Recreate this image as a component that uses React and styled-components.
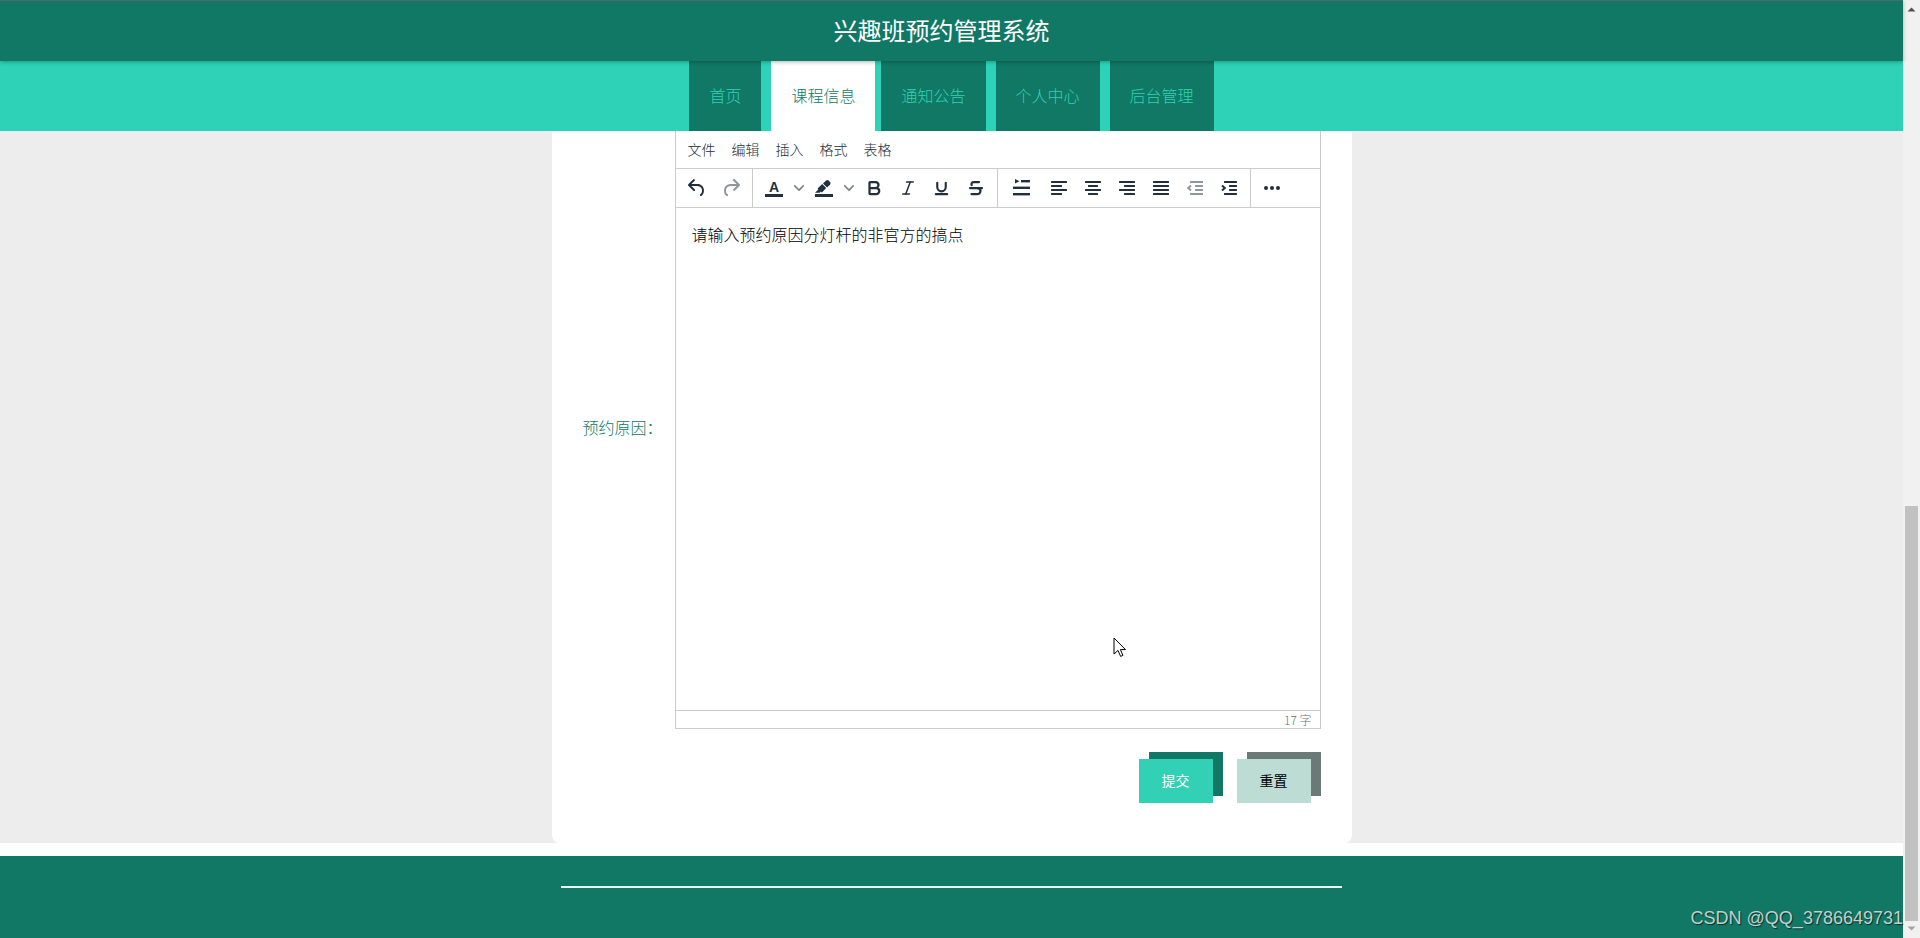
import { useState } from 'react';
import styled, { createGlobalStyle } from 'styled-components';
import { Bold, Italic, Strikethrough, Underline } from 'lucide-react';

const GlobalStyle = createGlobalStyle`
  :root {
    --primary: #107865;
    --accent: #2ed2b6;
    --surface: #ffffff;
    --page: #ededed;
    --line: #cccccc;
    --icon: #222f3e;
  }

  * {
    box-sizing: border-box;
  }

  body {
    margin: 0;
    background: var(--surface);
    font-family: "Noto Sans CJK SC", sans-serif;
    font-weight: 300;
    font-size: 16px;
  }

  button, textarea {
    font: inherit;
    border: none;
    padding: 0;
    background: none;
  }
`;

const Window = styled.div`
  display: grid;
  grid-template-columns: 1fr 17px;
  min-height: 100vh;
`;

const Page = styled.div`
  display: flex;
  flex-direction: column;
  min-width: 0;
`;

const Header = styled.header`
  position: relative;
  z-index: 1;
  height: 61px;
  padding: 0 20px 2px 0;
  display: flex;
  align-items: center;
  justify-content: center;
  background: var(--primary);
  border-top: 1px solid #4a6b6a;
  box-shadow: 0 1px 4px rgba(0, 0, 0, 0.3);
`;

const Title = styled.h1`
  margin: 0;
  font-size: 24px;
  line-height: 32px;
  font-weight: 400;
  color: #ffffff;
`;

const Nav = styled.nav`
  display: flex;
  justify-content: center;
  gap: 10px;
  height: 70px;
  background: var(--accent);
`;

const NavLink = styled.a`
  display: flex;
  align-items: center;
  padding: 0 20px 2px;
  text-decoration: none;
  color: ${props => props.$active ? 'var(--primary)' : 'var(--accent)'};
  background: ${props => props.$active ? 'var(--surface)' : 'var(--primary)'};
  margin-right: ${props => props.$active ? '-4px' : '0'};
`;

const Main = styled.main`
  background: var(--page);
`;

const Card = styled.form`
  max-width: 800px;
  margin: 0 auto;
  padding: 0 31px 40px;
  background: var(--surface);
  border-radius: 0 0 8px 8px;
`;

const Field = styled.div`
  display: flex;
  align-items: center;
  gap: 12px;
`;

const Label = styled.label`
  flex: none;
  padding-bottom: 6px;
  color: var(--primary);
`;

const Editor = styled.div`
  flex: 1;
  min-width: 0;
  border: 1px solid var(--line);
  border-top: none;
`;

const MenuBar = styled.div`
  display: flex;
  gap: 8px;
  height: 37px;
  padding: 0 8px 2px;
  align-items: center;
`;

const MenuButton = styled.button`
  padding: 0 4px;
  font-size: 14px;
  line-height: 24px;
  color: var(--icon);
`;

const ToolBar = styled.div`
  display: flex;
  height: 40px;
  border-top: 1px solid var(--line);
  border-bottom: 1px solid var(--line);
`;

const ToolGroup = styled.div`
  display: flex;
  align-items: center;
  padding: 0 4px;

  & + & {
    border-left: 1px solid var(--line);
  }
`;

const ToolButton = styled.button`
  display: flex;
  align-items: center;
  justify-content: center;
  width: ${props => props.$width || 34}px;
  height: 34px;
  color: var(--icon);

  &:disabled {
    opacity: 0.5;
  }
`;

const Content = styled.div`
  position: relative;
`;

const TextArea = styled.textarea`
  display: block;
  width: 100%;
  height: 502px;
  padding: 14px 16px;
  line-height: 24px;
  color: #000000;
  resize: none;
  outline: none;
`;

const Pointer = styled.svg`
  position: absolute;
  left: 437px;
  top: 429px;
`;

const StatusBar = styled.div`
  border-top: 1px solid var(--line);
  padding: 0 8px;
  text-align: right;
  font-size: 12px;
  line-height: 17px;
  color: #707275;
`;

const Actions = styled.div`
  display: flex;
  justify-content: flex-end;
  gap: 24px;
  padding: 30px 10px 0 0;
`;

const ActionButton = styled.button`
  width: 74px;
  height: 44px;
  padding-bottom: 2px;
  font-size: 14px;
  font-weight: 400;
  color: ${props => props.$secondary ? '#000000' : '#ffffff'};
  background: ${props => props.$secondary ? '#bddcd4' : '#32d1b6'};
  box-shadow: 10px -7px 0 ${props => props.$secondary ? '#6b7a76' : 'var(--primary)'};
`;

const Footer = styled.footer`
  position: relative;
  flex: 1;
  margin-top: 13px;
  padding-top: 30px;
  background: var(--primary);
`;

const Divider = styled.hr`
  max-width: 781px;
  height: 2px;
  margin: 0 auto;
  border: none;
  background: #e6f7f3;
`;

const Watermark = styled.span`
  position: absolute;
  right: 0;
  bottom: 8px;
  font-family: "Liberation Sans", sans-serif;
  font-size: 18px;
  line-height: 24px;
  color: #c3cfcc;
  text-shadow: 1px 1px 1px rgba(0, 0, 0, 0.6);
`;

const ScrollTrack = styled.div`
  display: flex;
  flex-direction: column;
  align-items: center;
  background: #f1f1f1;
`;

const ScrollArrow = styled.svg`
  flex: none;
  transform: ${props => props.$down ? 'rotate(180deg)' : 'none'};
`;

const ScrollSpace = styled.div`
  flex: 489;
`;

const ScrollThumb = styled.div`
  flex: 415;
  width: 13px;
  background: #c1c1c1;
`;

const Icon = ({ d, children }) => (
  <svg width="24" height="24" viewBox="0 0 24 24" fill="currentColor" aria-hidden="true">
    {d && <path d={d} />}
    {children}
  </svg>
);

// each line is [x, width], drawn from top to bottom
const LinesIcon = ({ lines, children }) => (
  <Icon>
    {lines.map(([x, width], i) => (
      <rect key={i} x={x} y={5 + i * 4} width={width} height="2" rx="0.5" />
    ))}
    {children}
  </Icon>
);

const Chevron = () => (
  <svg width="10" height="10" viewBox="0 0 10 10" fill="currentColor" opacity="0.6" aria-hidden="true">
    <path d="M8.7 2.2c.3-.3.8-.3 1 0 .4.4.4.9 0 1.2L5.7 7.8c-.3.3-.9.3-1.2 0L.2 3.4a.8.8 0 0 1 0-1.2c.3-.3.8-.3 1.1 0L5 6l3.7-3.8z" />
  </svg>
);

const TextColorIcon = () => (
  <Icon>
    <text x="12" y="16" textAnchor="middle" fontFamily="Liberation Sans" fontWeight="700" fontSize="14">A</text>
    <rect x="3" y="18" width="18" height="3" />
  </Icon>
);

const HighlightIcon = () => (
  <Icon d="M7.7 16.7H3l3.3-3.3-.7-.8L10.2 8l4 4.1-4 4.2c-.2.2-.6.2-.8 0l-.6-.7-1.1 1.1zm5-7.5L11 7.4l3-2.9a2 2 0 0 1 2.6 0L18 6c.7.7.7 2 0 2.7l-2.9 2.9-1.8-1.8-.5-.6">
    <rect x="3" y="18" width="18" height="3" />
  </Icon>
);

const LineHeightIcon = () => (
  <Icon>
    <path d="M5 3l4.5 2.2L5 7.5z" />
    <rect x="11" y="4" width="9" height="2.4" />
    <rect x="3" y="10.6" width="17" height="2.4" />
    <rect x="3" y="17" width="17" height="2.4" />
  </Icon>
);

const indentLines = [[7, 13], [12, 8], [12, 8], [7, 13]];

const toolGroups = [
  [
    { label: '撤销', icon: <Icon d="M6.4 8H12c3.7 0 6.2 2 6.8 5.1.6 2.7-.4 5.6-2.3 6.8a1 1 0 0 1-1-1.8c1.1-.6 1.8-2.7 1.4-4.6-.5-2.1-2.1-3.5-4.9-3.5H6.4l3.3 3.3a1 1 0 1 1-1.4 1.4l-5-5a1 1 0 0 1 0-1.4l5-5a1 1 0 0 1 1.4 1.4L6.4 8z" /> },
    { label: '重做', disabled: true, icon: <Icon d="M17.6 10H12c-2.8 0-4.4 1.4-4.9 3.5-.4 2 .3 4 1.4 4.6a1 1 0 1 1-1 1.8c-2-1.2-2.9-4.1-2.3-6.8.6-3 3-5.1 6.8-5.1h5.6l-3.3-3.3a1 1 0 1 1 1.4-1.4l5 5a1 1 0 0 1 0 1.4l-5 5a1 1 0 0 1-1.4-1.4l3.3-3.3z" /> },
  ],
  [
    { label: '文字颜色', icon: <TextColorIcon /> },
    { label: '选择文字颜色', width: 16, icon: <Chevron /> },
    { label: '背景颜色', icon: <HighlightIcon /> },
    { label: '选择背景颜色', width: 16, icon: <Chevron /> },
    { label: '粗体', icon: <Bold size={18} strokeWidth={3} /> },
    { label: '斜体', icon: <Italic size={18} strokeWidth={2} /> },
    { label: '下划线', icon: <Underline size={17} strokeWidth={3} /> },
    { label: '删除线', icon: <Strikethrough size={18} strokeWidth={3} /> },
  ],
  [
    { label: '行高', width: 40, icon: <LineHeightIcon /> },
    { label: '左对齐', icon: <LinesIcon lines={[[4, 16], [4, 11], [4, 16], [4, 11]]} /> },
    { label: '居中对齐', icon: <LinesIcon lines={[[4, 16], [7, 10], [4, 16], [7, 10]]} /> },
    { label: '右对齐', icon: <LinesIcon lines={[[4, 16], [9, 11], [4, 16], [9, 11]]} /> },
    { label: '两端对齐', icon: <LinesIcon lines={[[4, 16], [4, 16], [4, 16], [4, 16]]} /> },
    {
      label: '减少缩进',
      disabled: true,
      icon: (
        <LinesIcon lines={indentLines}>
          <path d="M8 9.5L5.2 12 8 14.5" fill="none" stroke="currentColor" strokeWidth="2" />
        </LinesIcon>
      ),
    },
    {
      label: '增加缩进',
      icon: (
        <LinesIcon lines={indentLines}>
          <path d="M5 9.5L7.8 12 5 14.5" fill="none" stroke="currentColor" strokeWidth="2" />
        </LinesIcon>
      ),
    },
  ],
  [
    {
      label: '更多',
      icon: (
        <Icon>
          <circle cx="6" cy="12" r="2" />
          <circle cx="12" cy="12" r="2" />
          <circle cx="18" cy="12" r="2" />
        </Icon>
      ),
    },
  ],
];

const navItems = ['首页', '课程信息', '通知公告', '个人中心', '后台管理'];
const menus = ['文件', '编辑', '插入', '格式', '表格'];

const App = () => {
  const [reason, setReason] = useState('请输入预约原因分灯杆的非官方的搞点');

  return (
    <Window>
      <GlobalStyle />
      <Page>
        <Header>
          <Title>兴趣班预约管理系统</Title>
        </Header>
        <Nav>
          {navItems.map(item => (
            <NavLink key={item} href="#" $active={item === '课程信息'}>{item}</NavLink>
          ))}
        </Nav>

        <Main>
          <Card onSubmit={(e) => e.preventDefault()}>
            <Field>
              <Label htmlFor="reason">预约原因：</Label>
              <Editor>
                <MenuBar>
                  {menus.map(menu => (
                    <MenuButton key={menu} type="button">{menu}</MenuButton>
                  ))}
                </MenuBar>
                <ToolBar>
                  {toolGroups.map((tools, i) => (
                    <ToolGroup key={i}>
                      {tools.map(tool => (
                        <ToolButton
                          key={tool.label}
                          type="button"
                          aria-label={tool.label}
                          disabled={tool.disabled}
                          $width={tool.width}
                        >
                          {tool.icon}
                        </ToolButton>
                      ))}
                    </ToolGroup>
                  ))}
                </ToolBar>
                <Content>
                  <TextArea
                    id="reason"
                    spellCheck={false}
                    value={reason}
                    onChange={(e) => setReason(e.target.value)}
                  />
                  <Pointer width="14" height="21" viewBox="0 0 14 21" aria-hidden="true">
                    <path d="M1 1v16l4-3.6 2.6 6 2.3-1-2.5-5.8H12.500z" fill="#fff" stroke="#000" />
                  </Pointer>
                </Content>
                <StatusBar>{reason.length} 字</StatusBar>
              </Editor>
            </Field>

            <Actions>
              <ActionButton type="submit">提交</ActionButton>
              <ActionButton type="button" $secondary onClick={() => setReason('')}>重置</ActionButton>
            </Actions>
          </Card>
        </Main>

        <Footer>
          <Divider />
          <Watermark>CSDN @QQ_3786649731</Watermark>
        </Footer>
      </Page>

      <ScrollTrack aria-hidden="true">
        <ScrollArrow width="17" height="17" viewBox="0 0 17 17">
          <path d="M4.500 11.500h8L8.500 7.500z" fill="#505050" />
        </ScrollArrow>
        <ScrollSpace />
        <ScrollThumb />
        <ScrollArrow $down width="17" height="17" viewBox="0 0 17 17">
          <path d="M4.500 11.500h8L8.500 7.500z" fill="#a3a3a3" />
        </ScrollArrow>
      </ScrollTrack>
    </Window>
  );
};

export default App;
